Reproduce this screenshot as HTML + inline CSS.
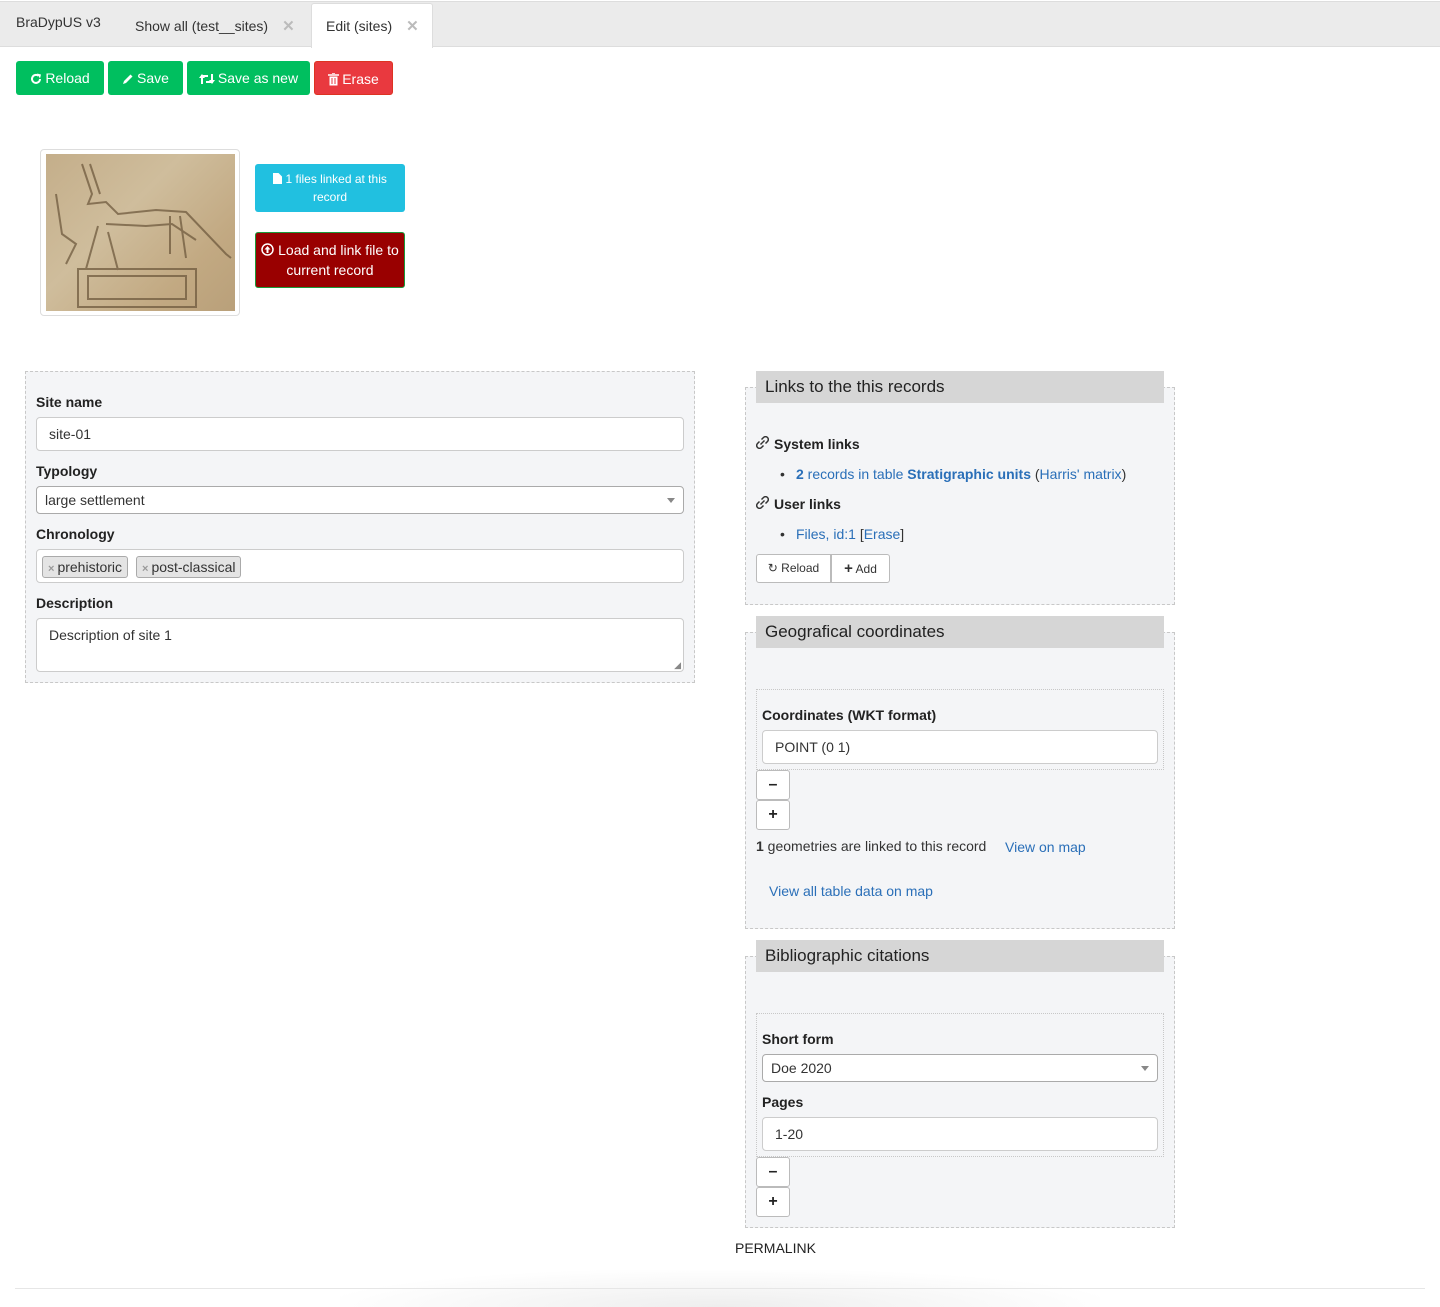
<!DOCTYPE html>
<html><head><meta charset="utf-8"><style>
*{box-sizing:border-box;margin:0;padding:0}
body{width:1440px;height:1307px;position:relative;background:#fff;font-family:"Liberation Sans",sans-serif;font-size:14px;color:#333;overflow:hidden}
.a{position:absolute}
.tabbar{left:0;top:1px;width:1440px;height:46px;background:#ebebeb;border-top:1px solid #ddd;border-bottom:1px solid #ddd}
.tab{top:0;height:46px;line-height:46px;font-size:14px;color:#333}
.x{color:#bbb;font-weight:bold;margin-left:14px;font-size:15px}
.btn{top:61px;height:34px;border-radius:3px;color:#fff;font-size:14px;line-height:34px;text-align:center;background:#00bf5f}
.btn svg{vertical-align:-2px;margin-right:3px}
.panel{background:#f4f5f7;border:1px dashed #c8c8c8}
.lbl{font-weight:bold;font-size:14px;color:#222}
.inp{background:#fff;border:1px solid #ccc;border-radius:4px;height:34px;line-height:32px;padding-left:12px;font-size:14px;color:#333}
.sel{height:28px;line-height:26px;padding-left:8px;border-color:#aaa}
.sel:after{content:"";position:absolute;right:8px;top:11px;border:4px solid transparent;border-top:5px solid #888}
.hdr{background:#d6d6d6;height:32px;line-height:32px;font-size:17px;padding-left:9px;color:#222}
a,.lk{color:#2a6fb8;text-decoration:none}
.sb{background:#fff;border:1px solid #bbb;border-radius:3px;width:34px;height:30px;text-align:center;line-height:28px;font-weight:bold;font-size:16px;color:#222}
.tag{top:6px;height:22px;line-height:20px;background:#e4e4e4;border:1px solid #aaa;border-radius:3px;padding:0 5px 0 5px;font-size:14px}
.tag b{color:#999;font-weight:bold;font-size:11px;margin-right:3px}
</style></head><body>

<div class="a tabbar"></div>
<div class="a tab" style="left:16px;line-height:44px">BraDypUS v3</div>
<div class="a tab" style="left:135px;top:3px">Show all (test__sites)<span class="x">✕</span></div>
<div class="a" style="left:311px;top:3px;width:122px;height:45px;background:#fff;border:1px solid #ddd;border-bottom:none;border-radius:3px 3px 0 0"></div>
<div class="a tab" style="left:326px;top:4px;line-height:45px">Edit (sites)<span class="x">✕</span></div>

<div class="a btn" style="left:16px;width:88px"><svg width="12" height="12" viewBox="0 0 12 12"><path d="M10 6A4 4 0 1 1 8.5 2.8" fill="none" stroke="#fff" stroke-width="2"/><path d="M7 0.5L11 1.5 10 5.5z" fill="#fff"/></svg>Reload</div>
<div class="a btn" style="left:108px;width:75px"><svg width="12" height="12" viewBox="0 0 12 12"><path d="M1 11L2 8 8.5 1.5 10.5 3.5 4 10z" fill="#fff"/></svg>Save</div>
<div class="a btn" style="left:187px;width:123px"><svg width="16" height="12" viewBox="0 0 16 12"><path d="M3 11V3H9M13 1V9H7" fill="none" stroke="#fff" stroke-width="2"/><path d="M0 5L3 1 6 5zM10 7L13 11 16 7z" fill="#fff"/></svg>Save as new</div>
<div class="a btn" style="left:314px;width:79px;background:#e9393f;border:1px solid #d32"><svg width="11" height="13" viewBox="0 0 11 13"><path d="M0 2H11M4 0H7" stroke="#fff" stroke-width="1.6"/><path d="M1.5 3.5H9.5V12.5H1.5z" fill="#fff"/><path d="M4 5V11M7 5V11" stroke="#e9393f" stroke-width="1"/></svg>Erase</div>

<div class="a" style="left:40px;top:149px;width:200px;height:167px;border:1px solid #ddd;border-radius:4px;background:#fff"></div>
<div class="a" style="left:46px;top:154px;width:189px;height:157px;background:linear-gradient(135deg,#c4ae8a,#cfbd9c 40%,#c2a982 75%,#b9a07a);overflow:hidden">
<svg width="189" height="157" viewBox="0 0 189 157"><g fill="none" stroke="#6f5a3e" stroke-width="2" opacity="0.75">
<path d="M36 10L46 40 42 50 60 48 72 60 110 56 140 58 180 100 185 104"/><path d="M44 10L54 40"/><path d="M60 70L100 72 126 70 150 86"/><path d="M10 40L16 80 30 90 20 110"/><path d="M52 72L40 115M62 78L72 116M124 62L124 100M134 62L140 104"/>
<path d="M32 115H150V153H32z"/><path d="M42 122H140V145H42z"/></g></svg></div>

<div class="a" style="left:255px;top:164px;width:150px;height:48px;background:#21c0e0;border-radius:3px;color:#fff;font-size:12px;text-align:center;line-height:18px;padding-top:6px"><svg width="9" height="11" viewBox="0 0 9 11" style="vertical-align:-1px"><path d="M0 0H5.5L9 3.5V11H0z" fill="#fff"/></svg> 1 files linked at this<br>record</div>
<div class="a" style="left:255px;top:232px;width:150px;height:56px;background:#990000;border:1px solid #1a9a3a;border-radius:3px;color:#fff;font-size:14px;text-align:center;line-height:20px;padding-top:7px"><svg width="13" height="13" viewBox="0 0 13 13" style="vertical-align:-1px"><circle cx="6.5" cy="6.5" r="5.5" fill="none" stroke="#fff" stroke-width="1.5"/><path d="M6.5 3L3.5 6.5H5.5V10H7.5V6.5H9.5z" fill="#fff"/></svg> Load and link file to<br>current record</div>

<div class="a panel" style="left:25px;top:371px;width:670px;height:312px"></div>
<div class="a lbl" style="left:36px;top:394px">Site name</div>
<div class="a inp" style="left:36px;top:417px;width:648px">site-01</div>
<div class="a lbl" style="left:36px;top:463px">Typology</div>
<div class="a inp sel" style="left:36px;top:486px;width:648px">large settlement</div>
<div class="a lbl" style="left:36px;top:526px">Chronology</div>
<div class="a inp" style="left:36px;top:549px;width:648px;padding:0">
 <div class="a tag" style="left:5px"><b>×</b>prehistoric</div>
 <div class="a tag" style="left:99px"><b>×</b>post-classical</div>
</div>
<div class="a lbl" style="left:36px;top:595px">Description</div>
<div class="a inp" style="left:36px;top:618px;width:648px;height:54px;line-height:18px;padding-top:7px">Description of site 1<span class="a" style="right:2px;bottom:1px;font-size:9px;color:#888;line-height:9px">◢</span></div>

<div class="a panel" style="left:745px;top:387px;width:430px;height:218px"></div>
<div class="a hdr" style="left:756px;top:371px;width:408px">Links to the this records</div>
<svg class="a" style="left:756px;top:436px" width="13" height="13" viewBox="0 0 13 13"><g fill="none" stroke="#333" stroke-width="1.5"><path d="M5.5 3.5L7.5 1.5A2 2 0 0 1 11.5 5.5L9.5 7.5"/><path d="M7.5 9.5L5.5 11.5A2 2 0 0 1 1.5 7.5L3.5 5.5"/><path d="M4.5 8.5L8.5 4.5"/></g></svg>
<div class="a lbl" style="left:774px;top:436px">System links</div>
<div class="a" style="left:780px;top:466px">•</div>
<div class="a lk" style="left:796px;top:466px"><b>2</b> records in table <b>Stratigraphic units</b> <span style="color:#333">(</span>Harris' matrix<span style="color:#333">)</span></div>
<svg class="a" style="left:756px;top:496px" width="13" height="13" viewBox="0 0 13 13"><g fill="none" stroke="#333" stroke-width="1.5"><path d="M5.5 3.5L7.5 1.5A2 2 0 0 1 11.5 5.5L9.5 7.5"/><path d="M7.5 9.5L5.5 11.5A2 2 0 0 1 1.5 7.5L3.5 5.5"/><path d="M4.5 8.5L8.5 4.5"/></g></svg>
<div class="a lbl" style="left:774px;top:496px">User links</div>
<div class="a" style="left:780px;top:526px">•</div>
<div class="a lk" style="left:796px;top:526px">Files, id:1 <span style="color:#333">[</span>Erase<span style="color:#333">]</span></div>
<div class="a" style="left:756px;top:554px;width:75px;height:29px;background:#fff;border:1px solid #bbb;border-radius:3px 0 0 3px;font-size:12px;line-height:27px;text-align:center">↻ Reload</div>
<div class="a" style="left:831px;top:554px;width:59px;height:29px;background:#fff;border:1px solid #bbb;border-radius:0 3px 3px 0;font-size:12px;line-height:27px;text-align:center"><b style="font-size:15px">+</b> Add</div>

<div class="a panel" style="left:745px;top:632px;width:430px;height:297px"></div>
<div class="a hdr" style="left:756px;top:616px;width:408px">Geografical coordinates</div>
<div class="a" style="left:756px;top:689px;width:408px;height:81px;border:1px dotted #c8c8c8"></div>
<div class="a lbl" style="left:762px;top:707px">Coordinates (WKT format)</div>
<div class="a inp" style="left:762px;top:730px;width:396px">POINT (0 1)</div>
<div class="a sb" style="left:756px;top:770px">–</div>
<div class="a sb" style="left:756px;top:800px">+</div>
<div class="a" style="left:756px;top:838px"><b>1</b> geometries are linked to this record</div>
<div class="a lk" style="left:1005px;top:839px">View on map</div>
<div class="a lk" style="left:769px;top:883px">View all table data on map</div>

<div class="a panel" style="left:745px;top:956px;width:430px;height:272px"></div>
<div class="a hdr" style="left:756px;top:940px;width:408px">Bibliographic citations</div>
<div class="a" style="left:756px;top:1013px;width:408px;height:144px;border:1px dotted #c8c8c8"></div>
<div class="a lbl" style="left:762px;top:1031px">Short form</div>
<div class="a inp sel" style="left:762px;top:1054px;width:396px">Doe 2020</div>
<div class="a lbl" style="left:762px;top:1094px">Pages</div>
<div class="a inp" style="left:762px;top:1117px;width:396px">1-20</div>
<div class="a sb" style="left:756px;top:1157px">–</div>
<div class="a sb" style="left:756px;top:1187px">+</div>

<div class="a" style="left:735px;top:1240px;font-size:14px;color:#222">PERMALINK</div>
<div class="a" style="left:340px;top:1270px;width:760px;height:37px;background:radial-gradient(ellipse at 50% 100%,#eee,rgba(255,255,255,0) 75%)"></div>
<div class="a" style="left:15px;top:1288px;width:1410px;height:1px;background:#e6e6e6"></div>
</body></html>
